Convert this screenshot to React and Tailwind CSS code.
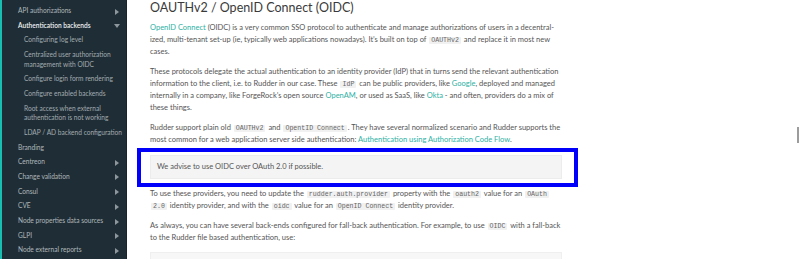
import React from 'react';

const sideItems = [
  { label: 'API authorizations', arrow: 'right' },
  { label: 'Authentication backends', arrow: 'down', active: true },
  { label: 'Configuring log level', sub: true },
  { label: ['Centralized user authorization', 'management with OIDC'], sub: true },
  { label: 'Configure login form rendering', sub: true },
  { label: 'Configure enabled backends', sub: true },
  { label: ['Root access when external', 'authentication is not working'], sub: true },
  { label: 'LDAP / AD backend configuration', sub: true },
  { label: 'Branding' },
  { label: 'Centreon', arrow: 'right' },
  { label: 'Change validation', arrow: 'right' },
  { label: 'Consul', arrow: 'right' },
  { label: 'CVE', arrow: 'right' },
  { label: 'Node properties data sources', arrow: 'right' },
  { label: 'GLPI', arrow: 'right' },
  { label: 'Node external reports', arrow: 'right' },
];

const Code = ({ children }) => (
  <code className="bg-[#f1f1f1] text-[#666] px-[2px] mx-[1px] rounded-[1px] leading-none text-[6.6px] font-['Liberation_Mono','DejaVu_Sans_Mono',monospace]">
    {children}
  </code>
);

const A = ({ children }) => <span className="text-[#2eb1a4]">{children}</span>;

// one rendered line of the paragraph, fixed height so inline code can't grow it
const Line = ({ children }) => <span className="block h-[12px] whitespace-nowrap">{children}</span>;

const SideItem = ({ item }) => {
  const lines = Array.isArray(item.label) ? item.label : [item.label];
  return (
    <div className={`flex items-start justify-between py-[2.6px] pr-[6px] leading-[9.5px] ${item.sub ? 'pl-[22px] text-[#a2abb0]' : 'pl-[16px] text-[#afb7bb]'} ${item.active ? 'text-[#eef1f2] font-semibold' : ''}`}>
      <div>
        {lines.map((l) => (
          <div key={l} className="whitespace-nowrap">{l}</div>
        ))}
      </div>
      {item.arrow === 'right' && (
        <span className="mt-[2.5px] mr-[1px] border-y-[3px] border-y-transparent border-l-[4px] border-l-[#8d979c]" />
      )}
      {item.arrow === 'down' && (
        <span className="mt-[3.5px] border-x-[3px] border-x-transparent border-t-[4px] border-t-[#8d979c]" />
      )}
    </div>
  );
};

export default function App() {
  return (
    <div className="relative flex w-[800px] h-[259px] overflow-hidden bg-white font-['Lato','Open_Sans',sans-serif]">
      {/* Sidebar */}
      <aside className="w-[127px] h-full shrink-0 bg-[#1f2e36] border-l-2 border-l-[#18bfb1] border-r border-r-[#18242a] pt-[3.5px] text-[6.6px]">
        {sideItems.map((item, i) => (
          <SideItem key={i} item={item} />
        ))}
      </aside>

      {/* Content */}
      <main className="flex-1 pl-[23px] text-[7.5px] leading-[12px] text-[#555]">
        <div className="w-[412px]">
          <h1 className="text-[12.5px] leading-[16px] text-[#3a3a3a] mb-[6px]">OAUTHv2 / OpenID Connect (OIDC)</h1>

          <p className="mb-[8px]">
            <Line><A>OpenID Connect</A> (OIDC) is a very common SSO protocol to authenticate and manage authorizations of users in a decentral-</Line>
            <Line>ized, multi-tenant set-up (ie, typically web applications nowadays). It’s built on top of <Code>OAUTHv2</Code> and replace it in most new</Line>
            <Line>cases.</Line>
          </p>

          <p className="mb-[8px]">
            <Line>These protocols delegate the actual authentication to an identity provider (IdP) that in turns send the relevant authentication</Line>
            <Line>information to the client, i.e. to Rudder in our case. These <Code>IdP</Code> can be public providers, like <A>Google</A>, deployed and managed</Line>
            <Line>internally in a company, like ForgeRock’s open source <A>OpenAM</A>, or used as SaaS, like <A>Okta</A> - and often, providers do a mix of</Line>
            <Line>these things.</Line>
          </p>

          <p className="mb-[9px]">
            <Line>Rudder support plain old <Code>OAUTHv2</Code> and <Code>OpentID Connect</Code>. They have several normalized scenario and Rudder supports the</Line>
            <Line>most common for a web application server side authentication: <A>Authentication using Authorization Code Flow</A>.</Line>
          </p>

          <div className="relative mb-[9px]">
            <div className="bg-[#f4f4f4] border border-[#ececec] px-[6px] py-[5px] leading-[12px]">
              We advise to use OIDC over OAuth 2.0 if possible.
            </div>
            <div className="absolute -left-[13px] -right-[16px] -top-[7px] -bottom-[8px] border-[4px] border-[#0000fb]" />
          </div>

          <p className="mb-[8px]">
            <Line>To use these providers, you need to update the <Code>rudder.auth.provider</Code> property with the <Code>oauth2</Code> value for an <Code>OAuth</Code></Line>
            <Line><Code>2.0</Code> identity provider, and with the <Code>oidc</Code> value for an <Code>OpenID Connect</Code> identity provider.</Line>
          </p>

          <p className="mb-[8px]">
            <Line>As always, you can have several back-ends configured for fall-back authentication. For example, to use <Code>OIDC</Code> with a fall-back</Line>
            <Line>to the Rudder file based authentication, use:</Line>
          </p>

          <div className="h-[40px] bg-[#f7f7f7] border border-[#efefef]" />
        </div>
      </main>

      <div className="absolute right-[1px] top-[127px] w-[2px] h-[16px] bg-[#9c9c9c]" />
    </div>
  );
}
